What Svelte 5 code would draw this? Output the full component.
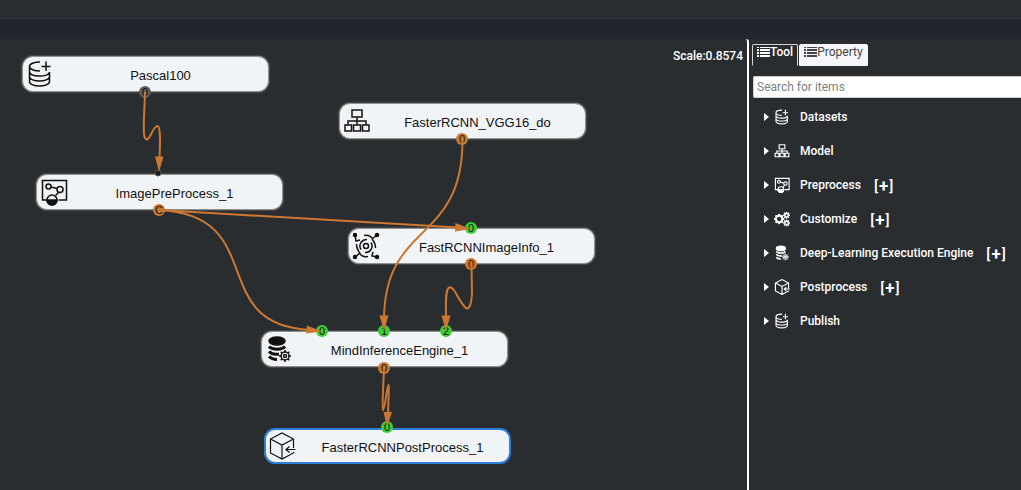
<script>
  const nodes = [
    { x: 22, y: 17, icon: 'dataset', label: 'Pascal100' },
    { x: 339, y: 64, icon: 'model', label: 'FasterRCNN_VGG16_do' },
    { x: 36, y: 135, icon: 'preprocess', label: 'ImagePreProcess_1' },
    { x: 348, y: 189, icon: 'info', label: 'FastRCNNImageInfo_1' },
    { x: 261, y: 292, icon: 'engine', label: 'MindInferenceEngine_1' },
    { x: 264, y: 389, icon: 'post', label: 'FasterRCNNPostProcess_1', selected: true }
  ];

  const ports = [
    { x: 145, y: 53, text: '0', kind: 'idle' },
    { x: 158, y: 134, text: '', kind: 'dark' },
    { x: 159, y: 171, text: 'C', kind: 'out' },
    { x: 462, y: 100, text: '0', kind: 'out' },
    { x: 471, y: 189, text: '0', kind: 'in' },
    { x: 471, y: 225, text: '0', kind: 'out' },
    { x: 322, y: 292, text: '0', kind: 'in' },
    { x: 384, y: 292, text: '1', kind: 'in' },
    { x: 446, y: 292, text: '2', kind: 'in' },
    { x: 384, y: 329, text: '0', kind: 'out' },
    { x: 387, y: 388, text: '0', kind: 'in' }
  ];

  const edges = [
    { line: 'M145 53C144 84 142 101 147 100.500C151 99 153 87 157.500 87C161 88 160 106 159.500 120', head: 'M155 117.500L163.500 117.500L159 133Z' },
    { line: 'M159 171L458 188.500', head: 'M455.500 184L455 192.500L471 190Z' },
    { line: 'M159 171C270 176 205 286 310 291', head: 'M307 286.500L306 294.500L322 292.500Z' },
    { line: 'M462.500 100C463 206 385 181 384 280', head: 'M379.500 276.500L388.500 276.500L384 292Z' },
    { line: 'M471.500 226L472 253C471.500 268 468 273 464 267C458 260 453 245 448.500 249C445 253 446 266 446 280', head: 'M441.500 276.500L450.500 276.500L446 292Z' },
    { line: 'M384 330C383 350 382 370 383 371C385 371 387 346 388.500 346C389.500 347 388 365 388 376', head: 'M383.500 373L392 373L387 388Z' }
  ];

  const groups = [
    { icon: 'dataset', label: 'Datasets' },
    { icon: 'model', label: 'Model' },
    { icon: 'preprocess', label: 'Preprocess', add: true },
    { icon: 'gears', label: 'Customize', add: true },
    { icon: 'engine', label: 'Deep-Learning Execution Engine', add: true },
    { icon: 'post', label: 'Postprocess', add: true },
    { icon: 'dataset', label: 'Publish' }
  ];
  const tooth = [0, 45, 90, 135, 180, 225, 270, 315];
</script>

{#snippet gear(cx, cy, r, w, len)}
  <circle {cx} {cy} {r} stroke-width={w} />
  {#each tooth as a}
    <path transform="rotate({a} {cx} {cy})" d="M{cx} {cy - r}v-{len}" stroke-width={w} />
  {/each}
{/snippet}

{#snippet icon(name)}
  <svg class="icon" viewBox="0 0 28 28" aria-hidden="true" fill="none" stroke="currentColor">
    {#if name === 'dataset'}
      <path d="M14 2C8 2 3.500 4 3.500 6.500S8 11 14 11M3.500 6.500V21.500C3.500 27.500 23.500 27.500 23.500 21.500V12M3.500 11.500C3.500 17.500 23.500 17.500 23.500 12M3.500 16.500C3.500 22.500 23.500 22.500 23.500 16.500M20 1.500v9.500M15.500 6.500h9" />
    {:else if name === 'model'}
      <path d="M9 3h10v7H9zM14 10v8M5 18v-4h18v4M2 18h6.500v6H2zM10.500 18h7v6h-7zM19.500 18H26v6h-6.500z" />
    {:else if name === 'preprocess'}
      <path d="M7 22H2.500V2.500h24V22h-8" />
      <circle cx="8.500" cy="8.500" r="2.500" />
      <circle cx="20" cy="11.500" r="3" />
      <path d="M11 9l6 1.500M18.500 14.500l-3 3" />
      <circle cx="12" cy="22" r="5" />
      <path d="M7 22a5 5 0 0 0 10 0z" fill="currentColor" />
    {:else if name === 'info'}
      <circle cx="14" cy="14" r="2.500" />
      <path d="M9 17.500a6.500 6.500 0 0 1 6-10M19 10.500a6.500 6.500 0 0 1-6 10M4.500 12q0 5 3.500 9M23.500 16q0-5-3.500-9M12 3.500q6-1 8 3M16 24.500q-6 1-8-3M3 3l1 6 4-1M25 3l-5 4M3 25l5-4M25 25l-5-1 1-4" />
      <g fill="currentColor"><circle cx="3" cy="3" r="1.500" /><circle cx="25" cy="3" r="1.500" /><circle cx="3" cy="25" r="1.500" /><circle cx="25" cy="25" r="1.500" /></g>
    {:else if name === 'engine'}
      <ellipse cx="12" cy="6" rx="8" ry="4" fill="currentColor" />
      <g stroke-width="3"><path d="M4 11.500c3 3.500 13 3.500 16 0" /><path d="M4 16.500c3 3 7 3 10 2.500" /><path d="M4 21.500c2 2 5 3 8 3" /></g>
      {@render gear(20, 21, 4, 1.5, 2)}
      <circle cx="20" cy="21" r="1.500" />
    {:else if name === 'post'}
      <path class="fine" d="M25.500 16V7L14 1 2.500 7v14L14 27l11.500-6v-1M2.500 7L14 13l11.500-6M14 13v14M27.500 17.500h-9M21.500 14.500l-3.500 3 3.500 3" />
    {:else if name === 'gears'}
      {@render gear(9, 14, 5.5, 3.5, 3.5)}
      {@render gear(22, 7.5, 3, 2.5, 3)}
      {@render gear(22, 21, 3, 2.5, 3)}
    {/if}
  </svg>
{/snippet}

{#snippet listIcon()}
  <svg class="list-icon" viewBox="0 0 13 10" aria-hidden="true" fill="currentColor">
    <path d="M0 0h2v1H0zM3 0h10v1H3zM0 2h2v2H0zM3 2h10v2H3zM0 5h2v2H0zM3 5h10v2H3zM0 8h2v2H0zM3 8h10v2H3z" />
  </svg>
{/snippet}

<div class="app">
  <header></header>
  <div class="strip"></div>
  <main>
    <section class="canvas" aria-label="Workflow">
      <p class="scale">Scale:0.8574</p>
      {#each nodes as n}
        <div class="node" class:selected={n.selected} style="left:{n.x}px;top:{n.y}px">
          {@render icon(n.icon)}
          <span>{n.label}</span>
        </div>
      {/each}
      <svg class="wires">
        {#each ports as p}
          <g class={p.kind}>
            <circle cx={p.x} cy={p.y} r={p.kind === 'dark' ? 3 : 6} />
            <text x={p.x} y={p.y + 4}>{p.text}</text>
          </g>
        {/each}
        {#each edges as e}
          <path class="line" d={e.line} />
          <path class="head" d={e.head} />
        {/each}
      </svg>
    </section>
    <aside>
      <nav>
        <button class="tab active" type="button">{@render listIcon()}Tool</button>
        <button class="tab" type="button">{@render listIcon()}Property</button>
      </nav>
      <input type="search" aria-label="Search for items" placeholder="Search for items" />
      <ul>
        {#each groups as g}
          <li>
            <button class="group" type="button">
              <i class="caret"></i>
              {@render icon(g.icon)}
              <span>{g.label}</span>
            </button>
            {#if g.add}<button class="add" type="button" aria-label="Add">[<b>+</b>]</button>{/if}
          </li>
        {/each}
      </ul>
    </aside>
  </main>
</div>

<style>
  :global(body) { margin: 0; background: #2a2d30; }
  .app {
    display: flex;
    flex-direction: column;
    min-height: 100vh;
    background: #2a2d30;
    color: #fff;
    font: 12px/16px Roboto, sans-serif;
  }
  header { height: 18px; border-bottom: 1px solid #37393d; }
  .strip { height: 20px; background: #22242e; }
  main { display: flex; flex: 1; }
  .canvas {
    position: relative;
    flex: 1;
    overflow: hidden;
    border-right: 2px solid #fff;
    border-top-right-radius: 3px;
  }
  .scale { margin: 0; padding: 9px 4px 0; text-align: right; font-weight: 500; }
  .node {
    position: absolute;
    display: flex;
    align-items: center;
    box-sizing: border-box;
    width: 247px;
    height: 36px;
    padding: 0 1px 0 3px;
    border: 1px solid #8f8f8c;
    border-radius: 11px;
    background: #f1f4f6;
    box-shadow: 0 0 2px #8f8f8c;
    color: #111;
    font: 13px/16px "Liberation Sans", Arial, sans-serif;
  }
  .node.selected { border: 2px solid #2f7fd6; box-shadow: none; padding: 0 0 0 2px; }
  .icon { stroke-width: 1.5; }
  .fine { stroke-width: 1.2; }
  .node .icon { width: 28px; height: 28px; }
  .node span { flex: 1; padding-top: 4px; text-align: center; }
  .wires { position: absolute; inset: 0; width: 100%; height: 100%; }
  .wires text { font: 11px "Liberation Sans", Arial, sans-serif; text-anchor: middle; fill: #111; }
  .in circle { fill: #40cc37; }
  .out circle { fill: #cc7832; }
  .idle circle { fill: #5c5c5c; }
  .dark circle { fill: #1b1c1f; stroke: #55585e; }
  .line { fill: none; stroke: #cc7832; stroke-width: 2; }
  .head { fill: #cc7832; }

  aside { display: flex; flex-direction: column; box-sizing: border-box; width: 272px; padding: 5px 0 0 3px; }
  button { border: 0; background: none; color: inherit; font: inherit; padding: 0; }
  nav { display: flex; gap: 1px; }
  .tab {
    display: flex;
    align-items: center;
    height: 22px;
    padding: 0 4px 6px;
    border: 1px solid #f4f6f9;
    border-radius: 2px 2px 0 0;
    background: #f4f6f9;
    color: #444;
  }
  .tab.active { border-color: #d4d6d9; border-bottom-color: transparent; background: none; color: #fff; font-weight: 500; }
  .list-icon { width: 13px; height: 10px; }
  input {
    box-sizing: border-box;
    margin: 10px 0 0 1px;
    height: 22px;
    padding: 0 3px;
    border: 1px solid #ccc;
    border-right: 0;
    border-radius: 2px 0 0 2px;
    background: #fff;
    font: 12px/16px Roboto, sans-serif;
  }
  input::placeholder { color: #808080; opacity: 1; }
  ul { display: flex; flex-direction: column; gap: 18px; margin: 0; padding: 11px 0 0 12px; list-style: none; }
  li { display: flex; align-items: center; gap: 13px; height: 16px; white-space: nowrap; }
  .group { display: flex; align-items: center; font-weight: 500; }
  .caret { border: 4px solid transparent; border-left: 5px solid #fff; border-right: 0; }
  .group .icon { width: 16px; height: 16px; margin: 0 10px 0 5px; stroke-width: 2; }
  .group .fine { stroke-width: 2; }
  .add { display: flex; gap: 1px; padding-top: 2px; font: 500 15px/16px Roboto, sans-serif; }
  .add b { font-size: 17px; }
</style>
